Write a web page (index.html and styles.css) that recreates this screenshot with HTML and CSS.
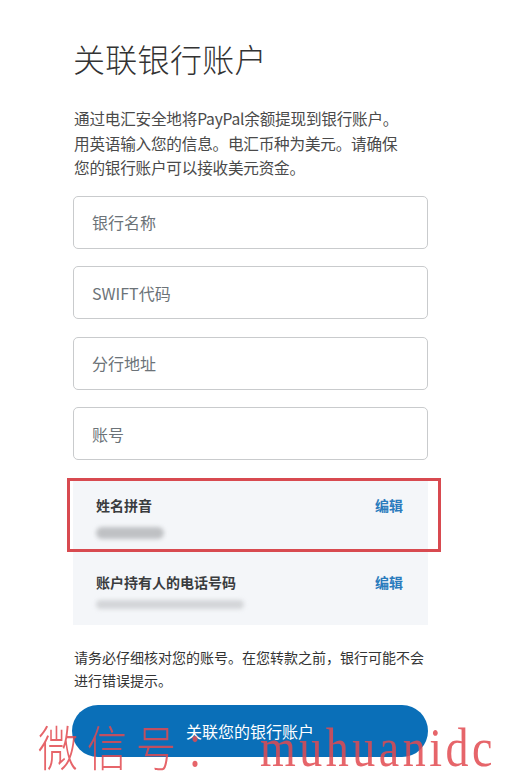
FILE: index.html
```html
<!DOCTYPE html>
<html lang="zh-CN">
<head>
<meta charset="utf-8">
<title>关联银行账户</title>
<link rel="stylesheet" href="styles.css">
</head>
<body>
<main class="page">
  <h1 class="title">关联银行账户</h1>
  <p class="intro">通过电汇安全地将PayPal余额提现到银行账户。<br>用英语输入您的信息。电汇币种为美元。请确保<br>您的银行账户可以接收美元资金。</p>
  <div class="fields">
    <div class="field">银行名称</div>
    <div class="field">SWIFT代码</div>
    <div class="field">分行地址</div>
    <div class="field">账号</div>
  </div>
  <section class="panel">
    <div class="row row-first">
      <div class="row-head"><span class="label">姓名拼音</span><a class="edit">编辑</a></div>
      <span class="blur blur-name"></span>
      <div class="highlight"></div>
    </div>
    <div class="row row-second">
      <div class="row-head"><span class="label">账户持有人的电话号码</span><a class="edit">编辑</a></div>
      <span class="blur blur-phone"></span>
    </div>
  </section>
  <p class="note">请务必仔细核对您的账号。在您转款之前，银行可能不会进行错误提示。</p>
  <button class="submit">关联您的银行账户</button>
</main>
<div class="watermark"><span class="wm-cjk">微信号：</span><span class="wm-latin">muhuanidc</span></div>
</body>
</html>
```
FILE: styles.css
```css
html, body {
  margin: 0;
  padding: 0;
  background: #ffffff;
}
body {
  font-family: "Noto Sans CJK SC", "Noto Sans", sans-serif;
  color: #2c2e2f;
  position: relative;
  min-height: 783px;
  overflow: hidden;
}
.page {
  width: 355px;
  margin: 0 0 0 73px;
  padding-top: 38px;
  display: flex;
  flex-direction: column;
}
.title {
  margin: 0;
  font-size: 32px;
  line-height: 40px;
  font-weight: 300;
  color: #333333;
  letter-spacing: 0.3px;
}
.intro {
  margin: 28px 0 0 1px;
  font-size: 15.6px;
  line-height: 24.5px;
  color: #4a4a4a;
  white-space: nowrap;
  letter-spacing: -0.2px;
}
.fields {
  margin-top: 16px;
  display: flex;
  flex-direction: column;
  gap: 17.5px;
}
.field {
  height: 51px;
  border: 1px solid #c9cbcd;
  border-radius: 5px;
  display: flex;
  align-items: center;
  padding-left: 18px;
  font-size: 16px;
  color: #6c7378;
  box-sizing: content-box;
}
.panel {
  margin-top: 20px;
  background: #f4f6f9;
  display: flex;
  flex-direction: column;
}
.row {
  position: relative;
  padding: 0 25px 0 23px;
  display: flex;
  flex-direction: column;
}
.row-first {
  padding-top: 15px;
  padding-bottom: 13px;
}
.row-second {
  padding-top: 20px;
  padding-bottom: 16px;
}
.row-head {
  display: flex;
  justify-content: space-between;
  align-items: center;
  height: 20px;
}
.label {
  font-size: 14px;
  font-weight: 700;
  color: #3a3c3e;
}
.edit {
  font-size: 14px;
  font-weight: 700;
  color: #2a7bbd;
  cursor: pointer;
}
.blur {
  display: block;
  height: 12px;
  border-radius: 6px;
  background: #bfc1c4;
  filter: blur(2px);
}
.blur-name {
  margin-top: 12px;
  width: 68px;
}
.blur-phone {
  margin-top: 8px;
  width: 148px;
  height: 9px;
  background: #d3d5d8;
}
.highlight {
  position: absolute;
  left: -6px;
  right: -13px;
  top: -2px;
  bottom: 0;
  border: 3px solid #d84a50;
  box-sizing: border-box;
}
.note {
  margin: 21px 0 0 1px;
  font-size: 14px;
  line-height: 23px;
  color: #333333;
}
.submit {
  margin-top: 13px;
  height: 52px;
  width: 356px;
  margin-left: -1px;
  border: none;
  border-radius: 26px;
  background: #0a6fb8;
  color: #ffffff;
  font-family: "Noto Sans CJK SC", "Noto Sans", sans-serif;
  font-size: 16px;
  padding: 0;
}
.watermark {
  position: absolute;
  left: 38px;
  top: 719px;
  color: rgba(226, 74, 80, 0.85);
  font-family: "Liberation Serif", serif;
  font-size: 46px;
  line-height: 60px;
  white-space: nowrap;
  pointer-events: none;
  transform: scaleY(1.2);
  transform-origin: 0 47px;
}
.wm-cjk {
  font-family: "Noto Sans CJK SC", serif;
  font-size: 40px;
  font-weight: 300;
  letter-spacing: 9px;
}
.wm-latin {
  font-family: "Liberation Serif", serif;
  font-size: 46px;
  letter-spacing: 3.5px;
  margin-left: 26px;
}
```
